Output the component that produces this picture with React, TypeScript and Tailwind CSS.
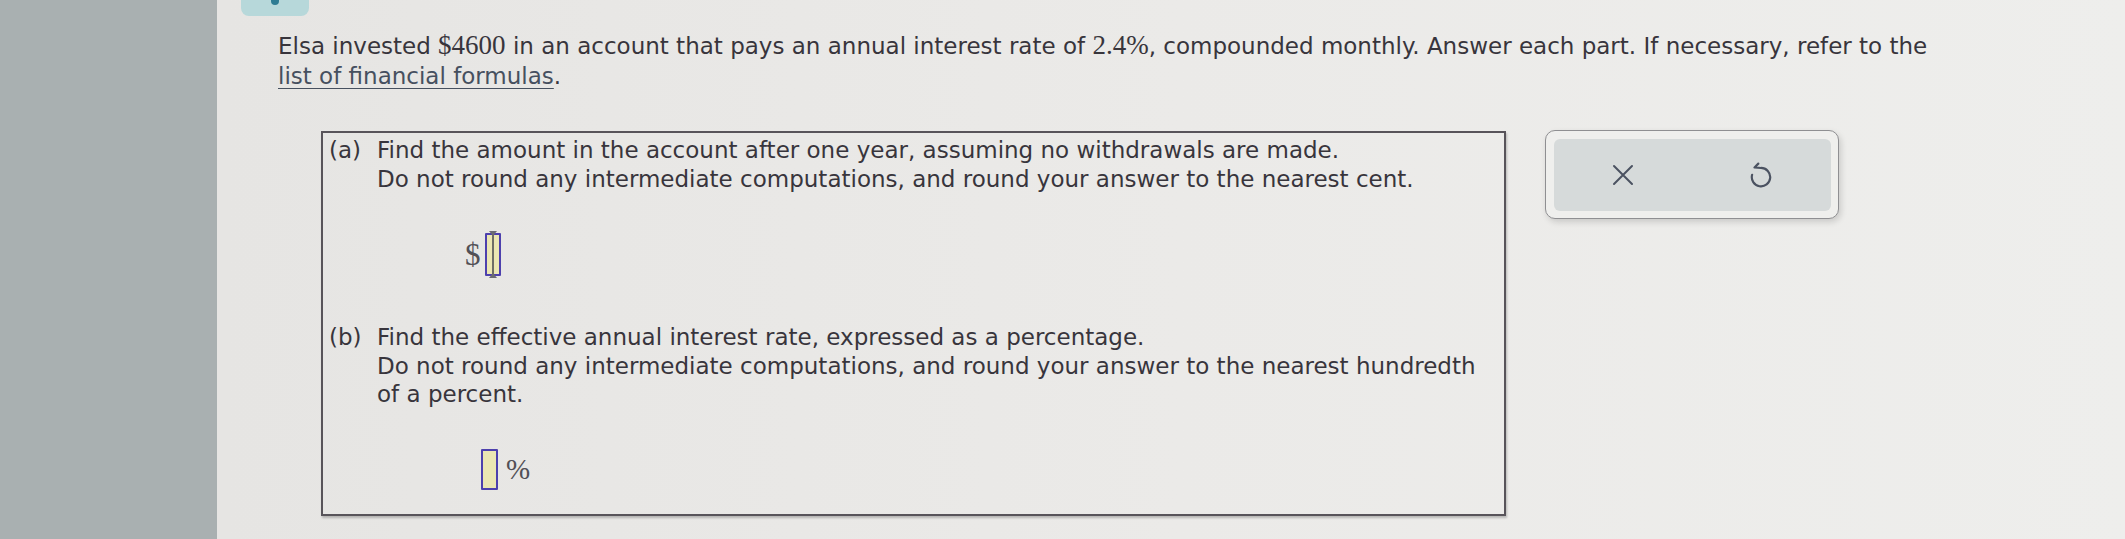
import * as React from 'react';

const body = { fontFamily: '"DejaVu Sans", Verdana, sans-serif' };
const serif = { fontFamily: '"Liberation Serif", "Times New Roman", serif' };

function AnswerBox({ cursor = false, className = '' }: { cursor?: boolean; className?: string }) {
  return (
    <span
      className={`relative inline-block border-2 border-[#4d40ad] bg-[#ebe6b3] rounded-[1px] ${className}`}
    >
      {cursor && (
        <svg
          className="absolute left-1/2 -translate-x-1/2 -top-[4px] -bottom-[4px] h-[calc(100%+8px)]"
          width="12"
          viewBox="0 0 12 47"
          preserveAspectRatio="none"
        >
          <path d="M2 0 L10 0 L6 5 Z M2 47 L10 47 L6 42 Z" fill="#6b6b73" />
          <line x1="6" y1="3" x2="6" y2="44" stroke="#6e6d66" strokeWidth="2" />
        </svg>
      )}
    </span>
  );
}

function UndoIcon() {
  return (
    <svg width="26" height="26" viewBox="0 0 24 24" fill="none" stroke="#4b5261" strokeWidth="2" strokeLinecap="round" strokeLinejoin="round">
      <path d="M9.5 1.5 L6 5 L12 5.5 A8.5 8.5 0 1 1 3.8 11.8" />
    </svg>
  );
}

function XIcon() {
  return (
    <svg width="22" height="22" viewBox="0 0 22 22" fill="none" stroke="#4b5261" strokeWidth="2" strokeLinecap="round">
      <path d="M2 2 L20 20 M20 2 L2 20" />
    </svg>
  );
}

export default function App() {
  return (
    <div className="flex w-[2125px] h-[539px] overflow-hidden bg-[#e8e7e5]" style={body}>
      {/* left rail */}
      <div className="w-[217px] shrink-0 bg-[#a9b0b1]" />

      <main className="flex-1 bg-gradient-to-r from-[#e6e5e3] via-[#ebeae8] to-[#eeeeec] text-[#38353c] text-[23px]">
        <div className="ml-[24px] w-[68px] h-[16px] rounded-b-[8px] bg-[#b7d8da] flex justify-center">
          <span className="w-[8px] h-[5px] rounded-b-full bg-[#2f7c93]" />
        </div>

        <div className="pl-[61px] pt-[14px] leading-[30px] whitespace-nowrap">
          <p>
            Elsa invested <span className="text-[27px]" style={serif}>$4600</span> in an account that pays an annual
            interest rate of <span className="text-[27px]" style={serif}>2.4%</span>, compounded monthly. Answer each
            part. If necessary, refer to the
          </p>
          <p>
            <span className="text-[#46505f] underline underline-offset-[4px] decoration-[1px]">
              list of financial formulas
            </span>
            .
          </p>
        </div>

        <div className="flex items-start mt-[40px] ml-[104px]">
          <section className="w-[1185px] h-[385px] border-2 border-[#58545a] shadow-[1px_2px_2px_rgba(0,0,0,0.22)] pt-[3px] pl-[6px] leading-[28.5px] whitespace-nowrap">
            <div className="flex">
              <span className="w-[48px] shrink-0">(a)</span>
              <div>
                <p>
                  Find the amount in the account after one year, assuming no withdrawals are made.
                  <br />
                  Do not round any intermediate computations, and round your answer to the nearest cent.
                </p>
                <div className="mt-[40px] ml-[88px] flex items-center h-[43px]">
                  <span className="text-[31px] leading-none text-[#525056] mr-[4px]" style={serif}>$</span>
                  <AnswerBox cursor className="w-[16px] h-[43px]" />
                </div>
              </div>
            </div>

            <div className="flex mt-[47px]">
              <span className="w-[48px] shrink-0">(b)</span>
              <div>
                <p>
                  Find the effective annual interest rate, expressed as a percentage.
                  <br />
                  Do not round any intermediate computations, and round your answer to the nearest hundredth
                  <br />
                  of a percent.
                </p>
                <div className="mt-[40px] ml-[104px] flex items-center h-[41px]">
                  <AnswerBox className="w-[17px] h-[41px]" />
                  <span className="ml-[8px] text-[29px] leading-none text-[#525056]" style={serif}>%</span>
                </div>
              </div>
            </div>
          </section>

          <div className="ml-[39px] -mt-[1px] w-[294px] h-[89px] rounded-[10px] border-[1.5px] border-[#8f8f92] bg-[#efefed] shadow-[2px_3px_6px_rgba(0,0,0,0.15)] p-[7.5px]">
            <div className="grid grid-cols-2 h-full rounded-[6px] bg-[#d6dada]">
              <button className="flex items-center justify-center">
                <XIcon />
              </button>
              <button className="flex items-center justify-center">
                <UndoIcon />
              </button>
            </div>
          </div>
        </div>
      </main>
    </div>
  );
}
